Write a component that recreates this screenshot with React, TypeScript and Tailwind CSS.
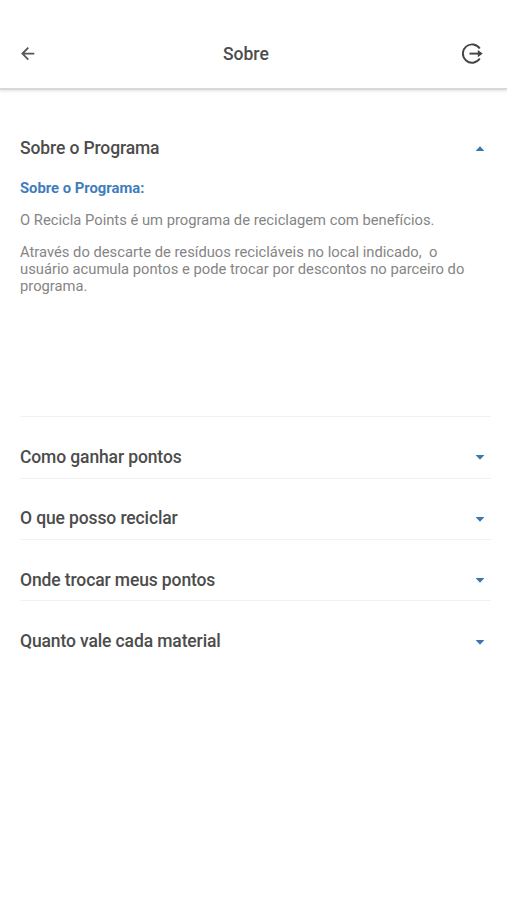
import React, { useState } from 'react';

interface Section {
  id: number;
  title: string;
  content?: React.ReactNode;
}

const sections: Section[] = [
  {
    id: 1,
    title: 'Sobre o Programa',
    content: (
      <>
        <h2 className="text-[14.8px] leading-[17px] font-bold text-[#3f7dbd]">Sobre o Programa:</h2>
        <p className="mt-[15px]">O Recicla Points é um programa de reciclagem com benefícios.</p>
        <p className="mt-[15px]">
          Através do descarte de resíduos recicláveis no local indicado,&nbsp; o
          <br />
          usuário acumula pontos e pode trocar por descontos no parceiro do
          <br />
          programa.
        </p>
      </>
    ),
  },
  { id: 2, title: 'Como ganhar pontos' },
  { id: 3, title: 'O que posso reciclar' },
  { id: 4, title: 'Onde trocar meus pontos' },
  { id: 5, title: 'Quanto vale cada material' },
];

const BackIcon = () => (
  <svg className="w-[14px] h-[14px]" viewBox="0 0 14 14" fill="none" stroke="#555555" strokeWidth={1.8}>
    <path d="M13.3 6.6H1.5M7.3 0.6L1.4 6.6l5.9 6" />
  </svg>
);

const ExitIcon = () => (
  <svg className="w-[22px] h-[22px]" viewBox="0 0 22 22" fill="none" stroke="#444444" strokeWidth={1.9}>
    <path d="M17.8 5.6A9.2 9.2 0 1 0 17.8 15.6" />
    <path d="M7.5 10.6h10" />
    <path d="M15.8 6.9L20.7 10.6L15.8 14.3Z" fill="#444444" stroke="none" />
  </svg>
);

const Caret: React.FC<{ open: boolean }> = ({ open }) => (
  <svg className="w-[10px] h-[5px]" viewBox="0 0 10 5" fill="#3b76b0">
    <path d={open ? 'M0.6 5L5 0.3L9.4 5Z' : 'M0.6 0L5 4.7L9.4 0Z'} />
  </svg>
);

const App: React.FC = () => {
  const [openId, setOpenId] = useState<number | null>(1);

  return (
    <div className="min-h-screen bg-white font-['Roboto',sans-serif] text-[#4c4c4c]">
      <header className="h-[90px] pt-[19px] pl-[21px] pr-[23px] flex items-center border-b-2 border-[#d8d8d8] shadow-[0_1px_3px_rgba(0,0,0,0.12)]">
        <button className="w-[22px]" aria-label="Voltar"><BackIcon /></button>
        <h1 className="ml-[180px] pt-[2px] text-[17.5px] font-medium">Sobre</h1>
        <button className="ml-auto" aria-label="Sair"><ExitIcon /></button>
      </header>

      <main className="pt-[18px] pl-5 pr-4">
        {sections.map((section, index) => {
          const open = openId === section.id;
          const last = index === sections.length - 1;
          return (
            <section key={section.id} className={last ? '' : 'border-b border-[#f2f2f2]'}>
              <button
                onClick={() => setOpenId(open ? null : section.id)}
                className="w-full h-[60.4px] pt-[19px] pr-[6px] flex items-center justify-between text-left"
              >
                <span className="text-[17.5px] leading-6 font-medium tracking-[-0.12px]">{section.title}</span>
                <span className="pt-[2px]"><Caret open={open} /></span>
              </button>
              {open && (
                <div className="h-[247.8px] pt-[12px] text-[14.75px] leading-[17px] text-[#858585]">
                  {section.content}
                </div>
              )}
            </section>
          );
        })}
      </main>
    </div>
  );
};

export default App;
